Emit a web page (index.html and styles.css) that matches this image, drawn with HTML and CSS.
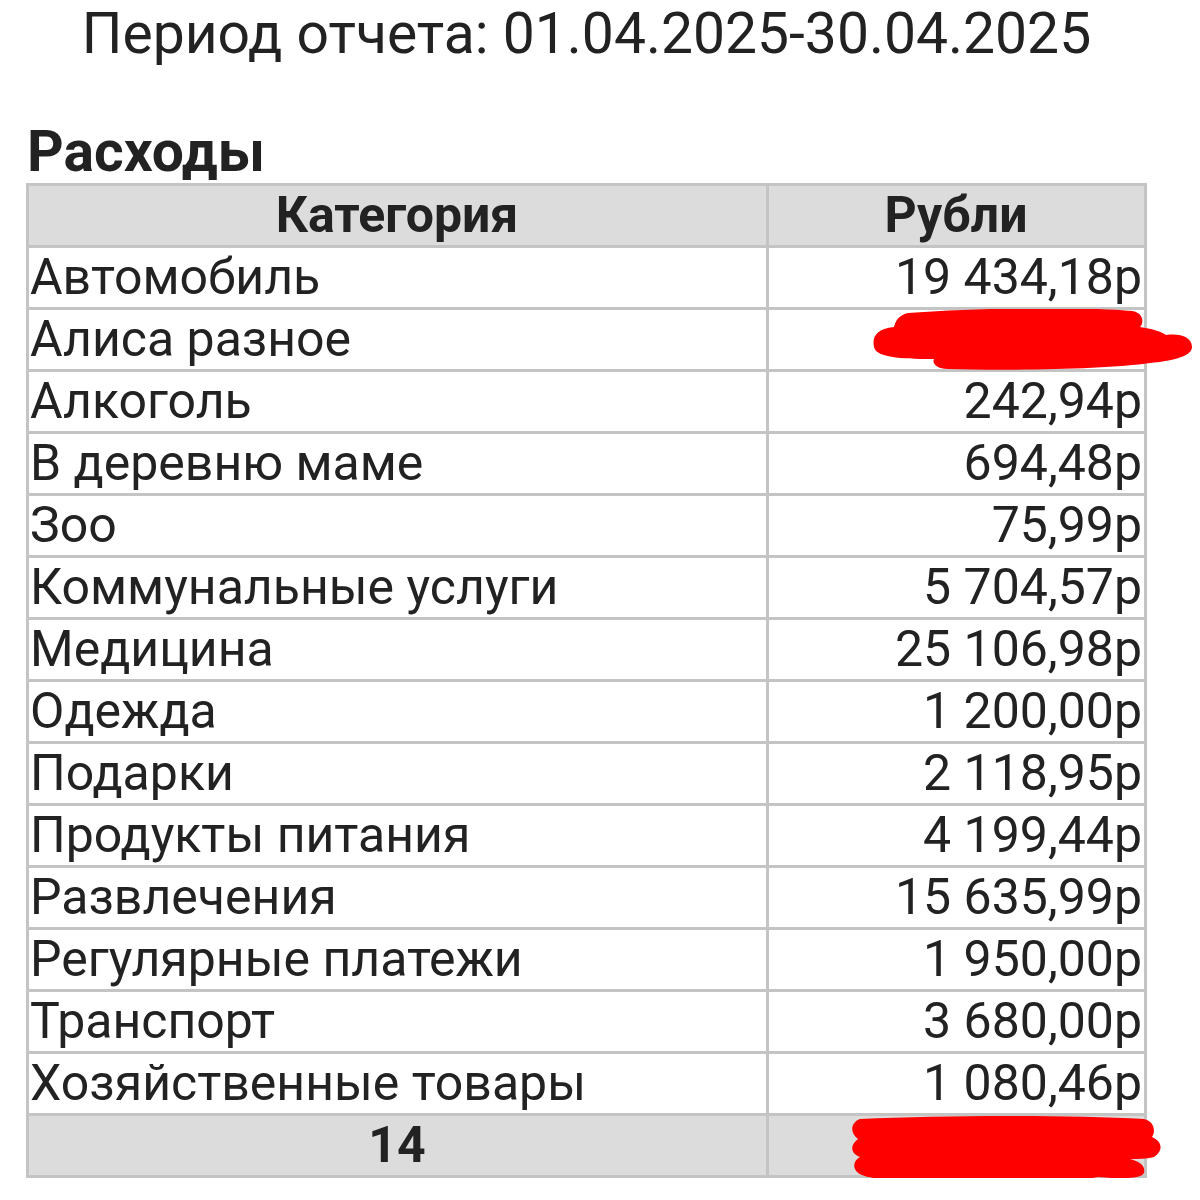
FILE: index.html
```html
<!DOCTYPE html>
<html lang="ru">
<head>
<meta charset="utf-8">
<link rel="stylesheet" href="styles.css">
</head>
<body>
<div class="page">
  <h1 class="period">Период отчета: 01.04.2025-30.04.2025</h1>
  <h2 class="section">Расходы</h2>
  <div class="table-wrap">
    <table class="report">
      <thead>
        <tr><th class="cat">Категория</th><th class="sum">Рубли</th></tr>
      </thead>
      <tbody>
        <tr><td>Автомобиль</td><td class="num">19 434,18р</td></tr>
        <tr><td>Алиса разное</td><td class="num"></td></tr>
        <tr><td>Алкоголь</td><td class="num">242,94р</td></tr>
        <tr><td>В деревню маме</td><td class="num">694,48р</td></tr>
        <tr><td>Зоо</td><td class="num">75,99р</td></tr>
        <tr><td>Коммунальные услуги</td><td class="num">5 704,57р</td></tr>
        <tr><td>Медицина</td><td class="num">25 106,98р</td></tr>
        <tr><td>Одежда</td><td class="num">1 200,00р</td></tr>
        <tr><td>Подарки</td><td class="num">2 118,95р</td></tr>
        <tr><td>Продукты питания</td><td class="num">4 199,44р</td></tr>
        <tr><td>Развлечения</td><td class="num">15 635,99р</td></tr>
        <tr><td>Регулярные платежи</td><td class="num">1 950,00р</td></tr>
        <tr><td>Транспорт</td><td class="num">3 680,00р</td></tr>
        <tr><td>Хозяйственные товары</td><td class="num">1 080,46р</td></tr>
      </tbody>
      <tfoot>
        <tr><td class="total">14</td><td class="total"></td></tr>
      </tfoot>
    </table>
    <svg class="scribble scribble-1" width="330" height="64" viewBox="0 0 330 64">
      <path fill="#ff0000" d="M38 4 C120 -2 220 -2 262 2 C274 4 274 14 270 18 C282 20 290 22 296 26 C310 24 322 28 322 38 C322 48 300 52 280 54 C240 60 140 62 78 60 C66 60 62 54 64 50 C40 50 6 50 4 38 C2 28 6 20 24 18 C26 10 30 6 38 4 Z"/>
    </svg>
    <svg class="scribble scribble-2" width="330" height="74" viewBox="0 0 330 74">
      <path fill="#ff0000" d="M12 4 C100 0 220 0 296 4 C306 6 308 16 304 22 C314 26 316 36 306 42 C298 44 290 44 282 44 C290 46 298 50 296 58 C294 64 270 64 250 62 C210 70 130 70 74 66 C50 66 22 64 14 60 C4 56 4 46 12 42 C2 38 2 30 10 24 C2 18 2 8 12 4 Z"/>
    </svg>
  </div>
</div>
</body>
</html>
```

FILE: styles.css
```css
html, body {
  margin: 0;
  padding: 0;
  background: #ffffff;
}

.page {
  width: 1200px;
  padding: 0 0 0 26px;
  box-sizing: border-box;
  font-family: Roboto, "Noto Sans", "Liberation Sans", sans-serif;
  color: #222222;
}

.period {
  margin: 0;
  padding-top: 0;
  width: 1121px;
  text-align: center;
  font-weight: 400;
  font-size: 57px;
  line-height: 67px;
}

.section {
  margin: 54px 0 0 1px;
  font-weight: 700;
  font-size: 57px;
  line-height: 62px;
}

.table-wrap {
  position: relative;
  width: 1121px;
}

.report {
  border-collapse: collapse;
  width: 1121px;
  table-layout: fixed;
  font-size: 50px;
}

.report th,
.report td {
  border: 3px solid #c4c4c4;
  height: 59px;
  padding: 0 2px 0 1px;
  line-height: 59px;
  white-space: nowrap;
}

.report th.cat {
  width: 734px;
}

.report thead th {
  background: #dcdcdc;
  font-weight: 700;
  text-align: center;
}

.report td.num {
  text-align: right;
}

.report tfoot td {
  background: #dcdcdc;
  font-weight: 700;
  text-align: center;
}

.scribble {
  position: absolute;
  z-index: 2;
  pointer-events: none;
}

.scribble-1 {
  left: 844px;
  top: 126px;
}

.scribble-2 {
  left: 822px;
  top: 932px;
}
```
